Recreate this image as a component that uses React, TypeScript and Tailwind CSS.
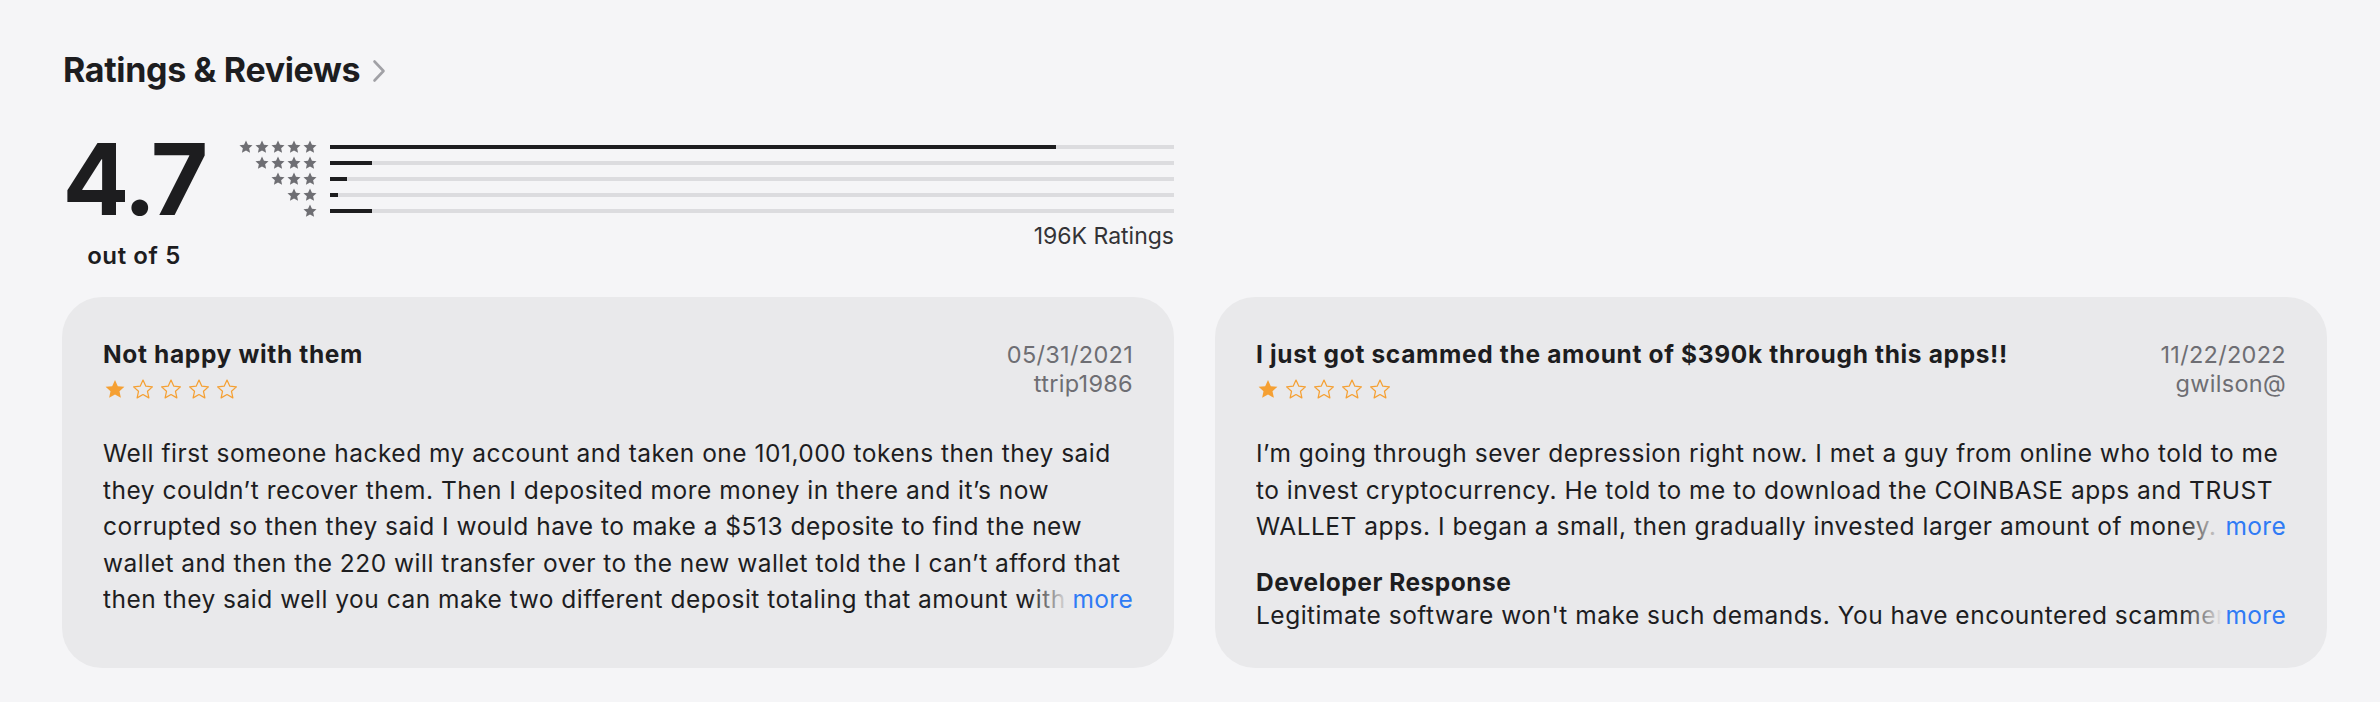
import React from 'react';

const STAR = 'M12 2.2l2.95 6.3 6.85.75-5.1 4.66 1.42 6.79L12 17.25 5.88 20.7l1.42-6.79-5.1-4.66 6.85-.75z';

const histogram = [
  { stars: 5, pct: 86 },
  { stars: 4, pct: 5 },
  { stars: 3, pct: 2 },
  { stars: 2, pct: 1 },
  { stars: 1, pct: 5 },
];

function GrayStar() {
  return (
    <svg viewBox="0 0 24 24" className="w-[16px] h-[16px]">
      <path d={STAR} fill="#6e6e73" />
    </svg>
  );
}

function OrangeStars({ value }: { value: number }) {
  return (
    <div className="flex gap-[2px] mt-[9px] h-[22px] -ml-[1px]">
      {[1, 2, 3, 4, 5].map(i => (
        <svg key={i} viewBox="0 0 24 24" className="w-[26px] h-[23px]">
          {i <= value ? (
            <path d={STAR} fill="#f5a033" />
          ) : (
            <path d={STAR} fill="none" stroke="#f5a033" strokeWidth="1.3" strokeLinejoin="round" />
          )}
        </svg>
      ))}
    </div>
  );
}

function More() {
  return (
    <span className="absolute right-0 bottom-0 pl-[44px] bg-[linear-gradient(to_right,rgba(233,233,235,0)_0,#e9e9eb_40px)] text-[#2f7bf5] tracking-[0.3px]">
      more
    </span>
  );
}

function ReviewCard({ title, date, author, body, lines, response }: {
  title: string; date: string; author: string; body: string; lines: number; response?: string;
}) {
  return (
    <div className="h-[371px] rounded-[40px] bg-[#e9e9eb] px-[41px] pt-[43px]">
      <div className="flex justify-between">
        <div>
          <h3 className="text-[24.5px] leading-[29px] font-bold tracking-[0.65px] text-[#1d1d1f]">{title}</h3>
          <OrangeStars value={1} />
        </div>
        <div className="text-right text-[23.5px] leading-[29px] tracking-[0.3px] text-[#6e6e73]">
          <div>{date}</div>
          <div>{author}</div>
        </div>
      </div>

      <div className="relative mt-[35px] text-[24.5px] leading-[36.5px] tracking-[0.5px] text-[#1d1d1f]">
        <p className={lines === 5 ? 'line-clamp-5' : 'line-clamp-3'}>{body}</p>
        <More />
      </div>

      {response && (
        <div className="mt-[23px]">
          <h4 className="text-[24.5px] leading-[29px] font-bold tracking-[0.5px] text-[#1d1d1f]">Developer Response</h4>
          <div className="relative text-[24.5px] leading-[36.5px] tracking-[0.5px] text-[#1d1d1f]">
            <p className="whitespace-nowrap overflow-hidden">{response}</p>
            <More />
          </div>
        </div>
      )}
    </div>
  );
}

export default function App() {
  return (
    <div className="min-h-screen bg-[#f5f5f7] font-['Inter',sans-serif] text-[#1d1d1f]">
      <section className="px-[62px] pt-[50px]">
        <h2 className="flex items-center gap-[12px] text-[34px] leading-[40px] font-bold tracking-[-0.01em] pl-[1px]">
          Ratings &amp; Reviews
          <svg viewBox="0 0 14 24" className="w-[14px] h-[24px] mt-[2px]">
            <path d="M2.5 2.5l9 9.5-9 9.5" fill="none" stroke="#a1a1a6" strokeWidth="2.6" strokeLinecap="round" strokeLinejoin="round" />
          </svg>
        </h2>

        {/* summary */}
        <div className="flex w-[1112px] mt-[40px]">
          <div className="w-[144px] flex flex-col items-center">
            <div className="text-[99px] leading-[99px] font-bold tracking-[-0.03em]">4.7</div>
            <div className="mt-[14px] text-[24px] leading-[26px] font-semibold tracking-[0.6px]">out of 5</div>
          </div>
          <div className="ml-[32px] flex-1 pt-[9px]">
            {histogram.map(row => (
              <div key={row.stars} className="flex items-center h-[16px]">
                <div className="w-[80px] flex justify-end">
                  {Array.from({ length: row.stars }).map((_, i) => <GrayStar key={i} />)}
                </div>
                <div className="ml-[12px] flex-1 h-[4px] bg-[#dcdcdf]">
                  <div className="h-full bg-[#1d1d1f]" style={{ width: `${row.pct}%` }} />
                </div>
              </div>
            ))}
            <div className="mt-[3px] text-right text-[23px] leading-[28px] text-[#333336]">196K Ratings</div>
          </div>
        </div>

        {/* reviews */}
        <div className="grid grid-cols-[1112px_1112px] gap-[41px] mt-[28px]">
          <ReviewCard
            title="Not happy with them"
            date="05/31/2021"
            author="ttrip1986"
            lines={5}
            body="Well first someone hacked my account and taken one 101,000 tokens then they said they couldn’t recover them. Then I deposited more money in there and it’s now corrupted so then they said I would have to make a $513 deposite to find the new wallet and then the 220 will transfer over to the new wallet told the I can’t afford that then they said well you can make two different deposit totaling that amount with the new wallet"
          />
          <ReviewCard
            title="I just got scammed the amount of $390k through this apps!!"
            date="11/22/2022"
            author="gwilson@"
            lines={3}
            body="I’m going through sever depression right now. I met a guy from online who told to me to invest cryptocurrency. He told to me to download the COINBASE apps and TRUST WALLET apps. I began a small, then gradually invested larger amount of money. After"
            response="Legitimate software won't make such demands. You have encountered scammers and we are sorry"
          />
        </div>
      </section>
    </div>
  );
}
